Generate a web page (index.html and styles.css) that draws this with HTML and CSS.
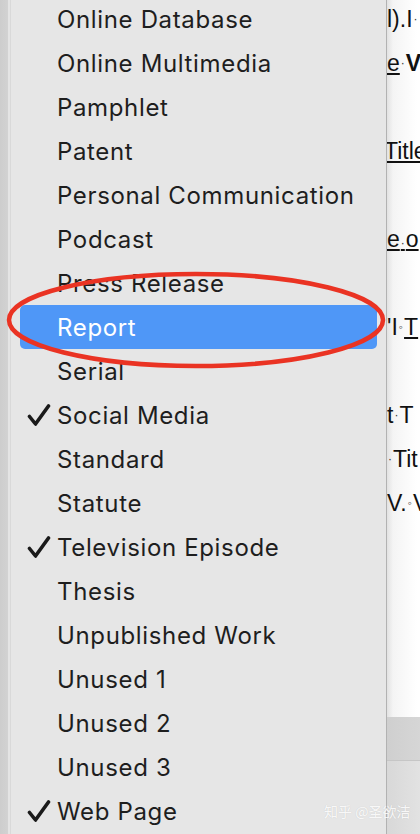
FILE: index.html
```html
<!DOCTYPE html>
<html>
<head>
<meta charset="utf-8">
<link rel="stylesheet" href="styles.css">
</head>
<body>
<div class="screen">
  <div class="leftstrip"></div>
  <div class="menu">
    <div class="item">Online Database</div>
    <div class="item">Online Multimedia</div>
    <div class="item">Pamphlet</div>
    <div class="item">Patent</div>
    <div class="item">Personal Communication</div>
    <div class="item">Podcast</div>
    <div class="item">Press Release</div>
    <div class="item selected">Report</div>
    <div class="item">Serial</div>
    <div class="item"><svg class="check" width="24" height="24" viewBox="0 0 24 24"><path d="M2.5 13.5 L8.5 21 L21.5 3" fill="none" stroke="#1a1a1a" stroke-width="3.6" stroke-linecap="round" stroke-linejoin="round"/></svg>Social Media</div>
    <div class="item">Standard</div>
    <div class="item">Statute</div>
    <div class="item"><svg class="check" width="24" height="24" viewBox="0 0 24 24"><path d="M2.5 13.5 L8.5 21 L21.5 3" fill="none" stroke="#1a1a1a" stroke-width="3.6" stroke-linecap="round" stroke-linejoin="round"/></svg>Television Episode</div>
    <div class="item">Thesis</div>
    <div class="item">Unpublished Work</div>
    <div class="item">Unused 1</div>
    <div class="item">Unused 2</div>
    <div class="item">Unused 3</div>
    <div class="item"><svg class="check" width="24" height="24" viewBox="0 0 24 24"><path d="M2.5 13.5 L8.5 21 L21.5 3" fill="none" stroke="#1a1a1a" stroke-width="3.6" stroke-linecap="round" stroke-linejoin="round"/></svg>Web Page</div>
  </div>
  <div class="doc">
    <div class="page">
      <div class="line">l).I<span class="mark">·</span></div>
      <div class="line"><u>e</u><span class="mark">·</span><b>V</b></div>
      <div class="line"></div>
      <div class="line shift"><u>Title</u></div>
      <div class="line"></div>
      <div class="line"><u>e<span class="mark">·</span>o</u></div>
      <div class="line"></div>
      <div class="line">'I<span class="mark">◦</span><u>T</u></div>
      <div class="line"></div>
      <div class="line">t<span class="mark">·</span>T</div>
      <div class="line"><span class="mark">·</span>Tit</div>
      <div class="line">V.<span class="mark">◦</span>V</div>
    </div>
    <div class="toolbar"></div>
    <div class="status"></div>
  </div>
</div>
<svg class="circle" width="420" height="834" viewBox="0 0 420 834">
  <ellipse cx="196" cy="320" rx="187" ry="46" fill="none" stroke="#ea3323" stroke-width="4.5"/>
</svg>
<div class="watermark">知乎 @圣欲洁</div>
</body>
</html>
```
FILE: styles.css
```css
html, body {
  margin: 0;
  padding: 0;
}
body {
  width: 420px;
  height: 834px;
  overflow: hidden;
  position: relative;
  background: #d0d0d0;
  font-family: Inter, "Liberation Sans", sans-serif;
}
.screen {
  display: grid;
  grid-template-columns: 10px 377px 1fr;
  height: 834px;
}
.leftstrip {
  background: linear-gradient(to right, #cdcdcd 0, #d2d2d2 8px, #e4e4e4 8px, #e4e4e4 10px);
}
.menu {
  background: #e6e6e6;
  border-left: 1px solid #d9d9d9;
  border-right: 1px solid #b2b2b2;
  box-sizing: border-box;
  margin-top: -3px;
}
.item {
  height: 44px;
  display: flex;
  align-items: center;
  padding-left: 46px;
  position: relative;
  font-size: 24px;
  letter-spacing: 0.65px;
  color: #1e1e1e;
  white-space: nowrap;
}
.item.selected {
  background: #4f97f7;
  color: #fff;
  margin: 0 9px;
  padding-left: 37px;
  border-radius: 5px;
}
.check {
  position: absolute;
  left: 16px;
  top: 10px;
}
.doc {
  display: flex;
  flex-direction: column;
  background: #fff;
  overflow: hidden;
}
.page {
  height: 720px;
  background: linear-gradient(to right, #e2e2e2 0, #f4f4f4 6px, #fff 30px);
  margin-top: -3px;
  overflow: hidden;
}
.line {
  height: 44px;
  display: flex;
  align-items: center;
  font-family: "Liberation Sans", sans-serif;
  font-size: 23px;
  color: #111;
  white-space: nowrap;
  padding-left: 0;
}
.line.shift {
  margin-left: -3px;
}
.mark {
  font-size: 12px;
  color: #333;
  padding: 0 1px;
}
.toolbar {
  height: 43px;
  background: linear-gradient(to right, #cfcfcf, #d6d6d6);
  border-bottom: 1px solid #c6c6c6;
}
.status {
  flex: 1;
  background: linear-gradient(to right, #d8d8d8, #e2e2e2);
}
.circle {
  position: absolute;
  left: 0;
  top: 0;
  pointer-events: none;
}
.watermark {
  position: absolute;
  left: 324px;
  top: 801px;
  font-family: "Noto Sans CJK SC", sans-serif;
  font-size: 14px;
  color: rgba(255, 255, 255, 0.9);
  text-shadow: 0 0 1px rgba(0,0,0,0.15);
  white-space: nowrap;
}
```
